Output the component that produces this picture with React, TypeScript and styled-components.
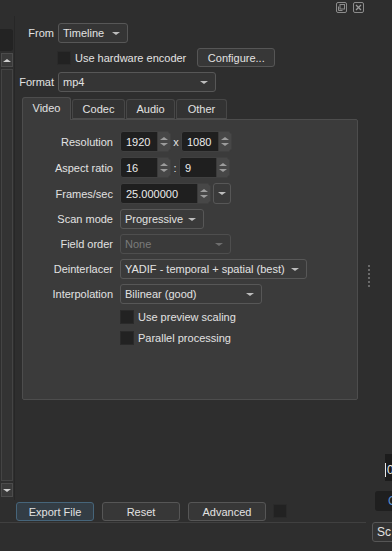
import styled, { createGlobalStyle } from 'styled-components';

const GlobalStyle = createGlobalStyle`
  html, body {
    margin: 0;
    padding: 0;
    background: #2e2e2e;
  }
  * {
    box-sizing: border-box;
  }
`;

const Window = styled.div`
  display: flex;
  width: 392px;
  height: 551px;
  overflow: hidden;
  background: #2e2e2e;
  color: #e2e2e2;
  font-family: "Liberation Sans", Arial, sans-serif;
  font-size: 11px;
`;

const DockPane = styled.div`
  display: flex;
  flex-direction: column;
  width: 366px;
  flex-shrink: 0;
`;

const TitleBar = styled.div`
  display: flex;
  justify-content: flex-end;
  align-items: flex-start;
  gap: 6px;
  height: 16px;
  padding: 2px 2px 0 0;
`;

const DockIcon = styled.svg`
  width: 11px;
  height: 11px;
  display: block;
`;

const Body = styled.div`
  display: flex;
  flex: 1;
  min-height: 0;
`;

const ScrollColumn = styled.div`
  display: flex;
  flex-direction: column;
  gap: 2px;
  width: 15px;
  flex-shrink: 0;
  padding: 13px 1px 3px 0;
  border-right: 1px solid #272727;
`;

const DarkStub = styled.div`
  height: 22px;
  background: #232323;
  border-radius: 0 3px 3px 0;
`;

const ScrollButton = styled.div`
  display: flex;
  align-items: center;
  justify-content: center;
  height: 14px;
  margin-left: 1px;
  background: #3a3a3a;
  border: 1px solid #4c4c4c;
`;

const ScrollTrack = styled.div`
  flex: 1;
  margin-left: 1px;
  background: #333333;
  border: 1px solid #444444;
`;

const Arrow = styled.div<{ $dir: 'up' | 'down'; $color?: string; $size?: number }>`
  width: 0;
  height: 0;
  border-left: ${p => p.$size ?? 4}px solid transparent;
  border-right: ${p => p.$size ?? 4}px solid transparent;
  ${p => p.$dir === 'up'
    ? `border-bottom: ${(p.$size ?? 4) - 1}px solid ${p.$color ?? '#d0d0d0'};`
    : `border-top: ${(p.$size ?? 4) - 1}px solid ${p.$color ?? '#d0d0d0'};`}
`;

const Content = styled.div`
  display: flex;
  flex-direction: column;
  flex: 1;
  padding: 7px 0 0 0;
`;

const TopGrid = styled.div`
  display: grid;
  grid-template-columns: 39px auto;
  column-gap: 4px;
  row-gap: 5px;
  align-items: center;
  justify-items: start;
`;

const TopLabel = styled.span`
  justify-self: end;
  white-space: nowrap;
`;

const Combo = styled.div<{ $width: number; $disabled?: boolean; $dark?: boolean }>`
  display: flex;
  align-items: center;
  justify-content: space-between;
  width: ${p => p.$width}px;
  height: 20px;
  padding: 0 7px 0 4px;
  background: ${p => (p.$dark ? '#353535' : '#3a3a3a')};
  border: 1px solid ${p => (p.$disabled ? '#4e4e4e' : '#575757')};
  border-radius: 3px;
  color: ${p => (p.$disabled ? '#7a7a7a' : '#e2e2e2')};
  white-space: nowrap;
`;

const CheckRow = styled.div`
  display: flex;
  align-items: center;
  gap: 4px;
  height: 19px;
  margin-left: -1px;
`;

const CheckBox = styled.div`
  width: 14px;
  height: 14px;
  flex-shrink: 0;
  background: #222222;
  border: 1px solid #2a2a2a;
`;

const Button = styled.div<{ $width: number; $primary?: boolean }>`
  display: flex;
  align-items: center;
  justify-content: center;
  width: ${p => p.$width}px;
  height: 19px;
  background: ${p => (p.$primary ? '#333d45' : '#373737')};
  border: 1px solid ${p => (p.$primary ? '#46657a' : '#565656')};
  border-radius: 3px;
  color: #e2e2e2;
  white-space: nowrap;
`;

const ConfigureButton = styled(Button)`
  margin-left: 7px;
`;

const TabArea = styled.div`
  display: flex;
  flex-direction: column;
  margin: 5px 0 0 7px;
  width: 336px;
`;

const TabBar = styled.div`
  display: flex;
  align-items: flex-end;
  gap: 1px;
  height: 22px;
`;

const Tab = styled.div<{ $width: number; $active?: boolean }>`
  display: flex;
  align-items: center;
  justify-content: center;
  width: ${p => p.$width}px;
  height: ${p => (p.$active ? 23 : 20)}px;
  margin-bottom: ${p => (p.$active ? -1 : 0)}px;
  padding-bottom: ${p => (p.$active ? 2 : 0)}px;
  background: ${p => (p.$active ? '#3b3b3b' : '#333333')};
  border: 1px solid ${p => (p.$active ? '#4d4d4d' : '#474747')};
  border-bottom: ${p => (p.$active ? 'none' : '1px solid #4d4d4d')};
  border-radius: 3px 3px 0 0;
  position: relative;
  z-index: ${p => (p.$active ? 1 : 0)};
`;

const Panel = styled.div`
  display: flex;
  flex-direction: column;
  gap: 5px;
  height: 281px;
  padding-top: 11px;
  background: #3b3b3b;
  border: 1px solid #4d4d4d;
  border-radius: 0 2px 2px 2px;
`;

const FormRow = styled.div`
  display: flex;
  align-items: center;
`;

const RowLabel = styled.span`
  width: 90px;
  margin-right: 7px;
  text-align: right;
  white-space: nowrap;
`;

const Spin = styled.div<{ $width: number }>`
  display: flex;
  width: ${p => p.$width}px;
  height: 21px;
  background: #1f1f1f;
  border: 1px solid #404040;
  border-radius: 3px;
  overflow: hidden;
`;

const SpinText = styled.span`
  flex: 1;
  display: flex;
  align-items: center;
  padding-left: 5px;
  color: #ececec;
`;

const SpinButtons = styled.div`
  display: flex;
  flex-direction: column;
  align-items: center;
  justify-content: center;
  gap: 3px;
  width: 13px;
  background: #474747;
  border-left: 1px solid #3a3a3a;
`;

const Sep = styled.span<{ $w: number }>`
  width: ${p => p.$w}px;
  text-align: center;
`;

const DropButton = styled.div`
  display: flex;
  align-items: center;
  justify-content: center;
  width: 18px;
  height: 21px;
  margin-left: 2px;
  background: #3a3a3a;
  border: 1px solid #575757;
  border-radius: 3px;
`;

const PanelCheck = styled.div`
  display: flex;
  align-items: center;
  gap: 4px;
  height: 16px;
  margin-left: 97px;
`;

const ButtonsRow = styled.div`
  display: flex;
  gap: 8px;
  align-items: flex-start;
  height: 23px;
  padding: 2px 0 0 16px;
  border-bottom: 1px solid #404040;
`;

const SmallSquare = styled.div`
  width: 14px;
  height: 14px;
  margin: 2px 0 0 -1px;
  background: #222222;
  border: 1px solid #2a2a2a;
`;

const BottomFill = styled.div`
  height: 28px;
`;

const Splitter = styled.div`
  display: flex;
  flex-direction: column;
  justify-content: center;
  align-items: center;
  gap: 2px;
  width: 6px;
  flex-shrink: 0;
`;

const Dot = styled.div`
  width: 2px;
  height: 2px;
  background: #6a6a6a;
`;

const RightPane = styled.div`
  display: flex;
  flex-direction: column;
  justify-content: flex-end;
  width: 20px;
  flex-shrink: 0;
  overflow: hidden;
  padding-bottom: 9px;
`;

const TimeField = styled.div`
  display: flex;
  align-items: flex-end;
  width: 40px;
  height: 27px;
  margin-left: 13px;
  padding-bottom: 4px;
  background: #1c1c1c;
  color: #e8e8e8;
  font-size: 12px;
`;

const Caret = styled.span`
  width: 1px;
  height: 14px;
  margin-right: 1px;
  background: #e8e8e8;
`;

const DarkButton = styled.div`
  display: flex;
  align-items: center;
  width: 40px;
  height: 20px;
  margin: 10px 0 0 3px;
  padding-left: 13px;
  background: #1f1f1f;
  border-radius: 3px;
  color: #5a8fd0;
  font-size: 12px;
`;

const SideButton = styled.div`
  display: flex;
  align-items: center;
  width: 40px;
  height: 20px;
  margin-top: 11px;
  padding-left: 4px;
  background: #333333;
  border: 1px solid #565656;
  border-radius: 3px;
  color: #e2e2e2;
  font-size: 12px;
`;

const FloatIcon = () => (
  <DockIcon viewBox="0 0 11 11">
    <rect x="0.5" y="0.5" width="10" height="10" rx="1.5" fill="none" stroke="#8c8c8c" />
    <rect x="4" y="2.5" width="4.5" height="4.5" fill="none" stroke="#8c8c8c" />
    <path d="M2.5 4.5 V8.5 H6.5" fill="none" stroke="#8c8c8c" />
  </DockIcon>
);

const CloseIcon = () => (
  <DockIcon viewBox="0 0 11 11">
    <rect x="0.5" y="0.5" width="10" height="10" rx="1.5" fill="none" stroke="#8c8c8c" />
    <path d="M3 3 L8 8 M8 3 L3 8" stroke="#9a9a9a" strokeWidth="1.3" />
  </DockIcon>
);

const SpinBox = ({ value, width }: { value: string; width: number }) => (
  <Spin $width={width}>
    <SpinText>{value}</SpinText>
    <SpinButtons>
      <Arrow $dir="up" $color="#9c9c9c" $size={4} />
      <Arrow $dir="down" $color="#9c9c9c" $size={4} />
    </SpinButtons>
  </Spin>
);

const ComboBox = ({ value, width, disabled, dark }: { value: string; width: number; disabled?: boolean; dark?: boolean }) => (
  <Combo $width={width} $disabled={disabled} $dark={dark}>
    <span>{value}</span>
    <Arrow $dir="down" $color={disabled ? '#6e6e6e' : '#bdbdbd'} $size={4} />
  </Combo>
);

export default function App() {
  return (
    <>
      <GlobalStyle />
      <Window>
        <DockPane>
          <TitleBar>
            <FloatIcon />
            <CloseIcon />
          </TitleBar>
          <Body>
            <ScrollColumn>
              <DarkStub />
              <ScrollButton>
                <Arrow $dir="up" $size={4} />
              </ScrollButton>
              <ScrollTrack />
              <ScrollButton>
                <Arrow $dir="down" $size={4} />
              </ScrollButton>
            </ScrollColumn>
            <Content>
              <TopGrid>
                <TopLabel>From</TopLabel>
                <ComboBox value="Timeline" width={70} dark />
                <span />
                <CheckRow>
                  <CheckBox />
                  <span>Use hardware encoder</span>
                  <ConfigureButton $width={78}>Configure...</ConfigureButton>
                </CheckRow>
                <TopLabel>Format</TopLabel>
                <ComboBox value="mp4" width={158} dark />
              </TopGrid>
              <TabArea>
                <TabBar>
                  <Tab $width={49} $active>Video</Tab>
                  <Tab $width={53}>Codec</Tab>
                  <Tab $width={49}>Audio</Tab>
                  <Tab $width={51}>Other</Tab>
                </TabBar>
                <Panel>
                  <FormRow>
                    <RowLabel>Resolution</RowLabel>
                    <SpinBox value="1920" width={51} />
                    <Sep $w={10}>x</Sep>
                    <SpinBox value="1080" width={51} />
                  </FormRow>
                  <FormRow>
                    <RowLabel>Aspect ratio</RowLabel>
                    <SpinBox value="16" width={51} />
                    <Sep $w={8}>:</Sep>
                    <SpinBox value="9" width={51} />
                  </FormRow>
                  <FormRow>
                    <RowLabel>Frames/sec</RowLabel>
                    <SpinBox value="25.000000" width={91} />
                    <DropButton>
                      <Arrow $dir="down" $color="#bdbdbd" $size={4} />
                    </DropButton>
                  </FormRow>
                  <FormRow>
                    <RowLabel>Scan mode</RowLabel>
                    <ComboBox value="Progressive" width={84} />
                  </FormRow>
                  <FormRow>
                    <RowLabel>Field order</RowLabel>
                    <ComboBox value="None" width={111} disabled />
                  </FormRow>
                  <FormRow>
                    <RowLabel>Deinterlacer</RowLabel>
                    <ComboBox value="YADIF - temporal + spatial (best)" width={187} />
                  </FormRow>
                  <FormRow>
                    <RowLabel>Interpolation</RowLabel>
                    <ComboBox value="Bilinear (good)" width={142} />
                  </FormRow>
                  <PanelCheck>
                    <CheckBox />
                    <span>Use preview scaling</span>
                  </PanelCheck>
                  <PanelCheck>
                    <CheckBox />
                    <span>Parallel processing</span>
                  </PanelCheck>
                </Panel>
              </TabArea>
            </Content>
          </Body>
          <ButtonsRow>
            <Button $width={78} $primary>Export File</Button>
            <Button $width={78}>Reset</Button>
            <Button $width={78}>Advanced</Button>
            <SmallSquare />
          </ButtonsRow>
          <BottomFill />
        </DockPane>
        <Splitter>
          <Dot />
          <Dot />
          <Dot />
          <Dot />
          <Dot />
          <Dot />
        </Splitter>
        <RightPane>
          <TimeField>
            <Caret />
            0
          </TimeField>
          <DarkButton>C</DarkButton>
          <SideButton>Sc</SideButton>
        </RightPane>
      </Window>
    </>
  );
}
